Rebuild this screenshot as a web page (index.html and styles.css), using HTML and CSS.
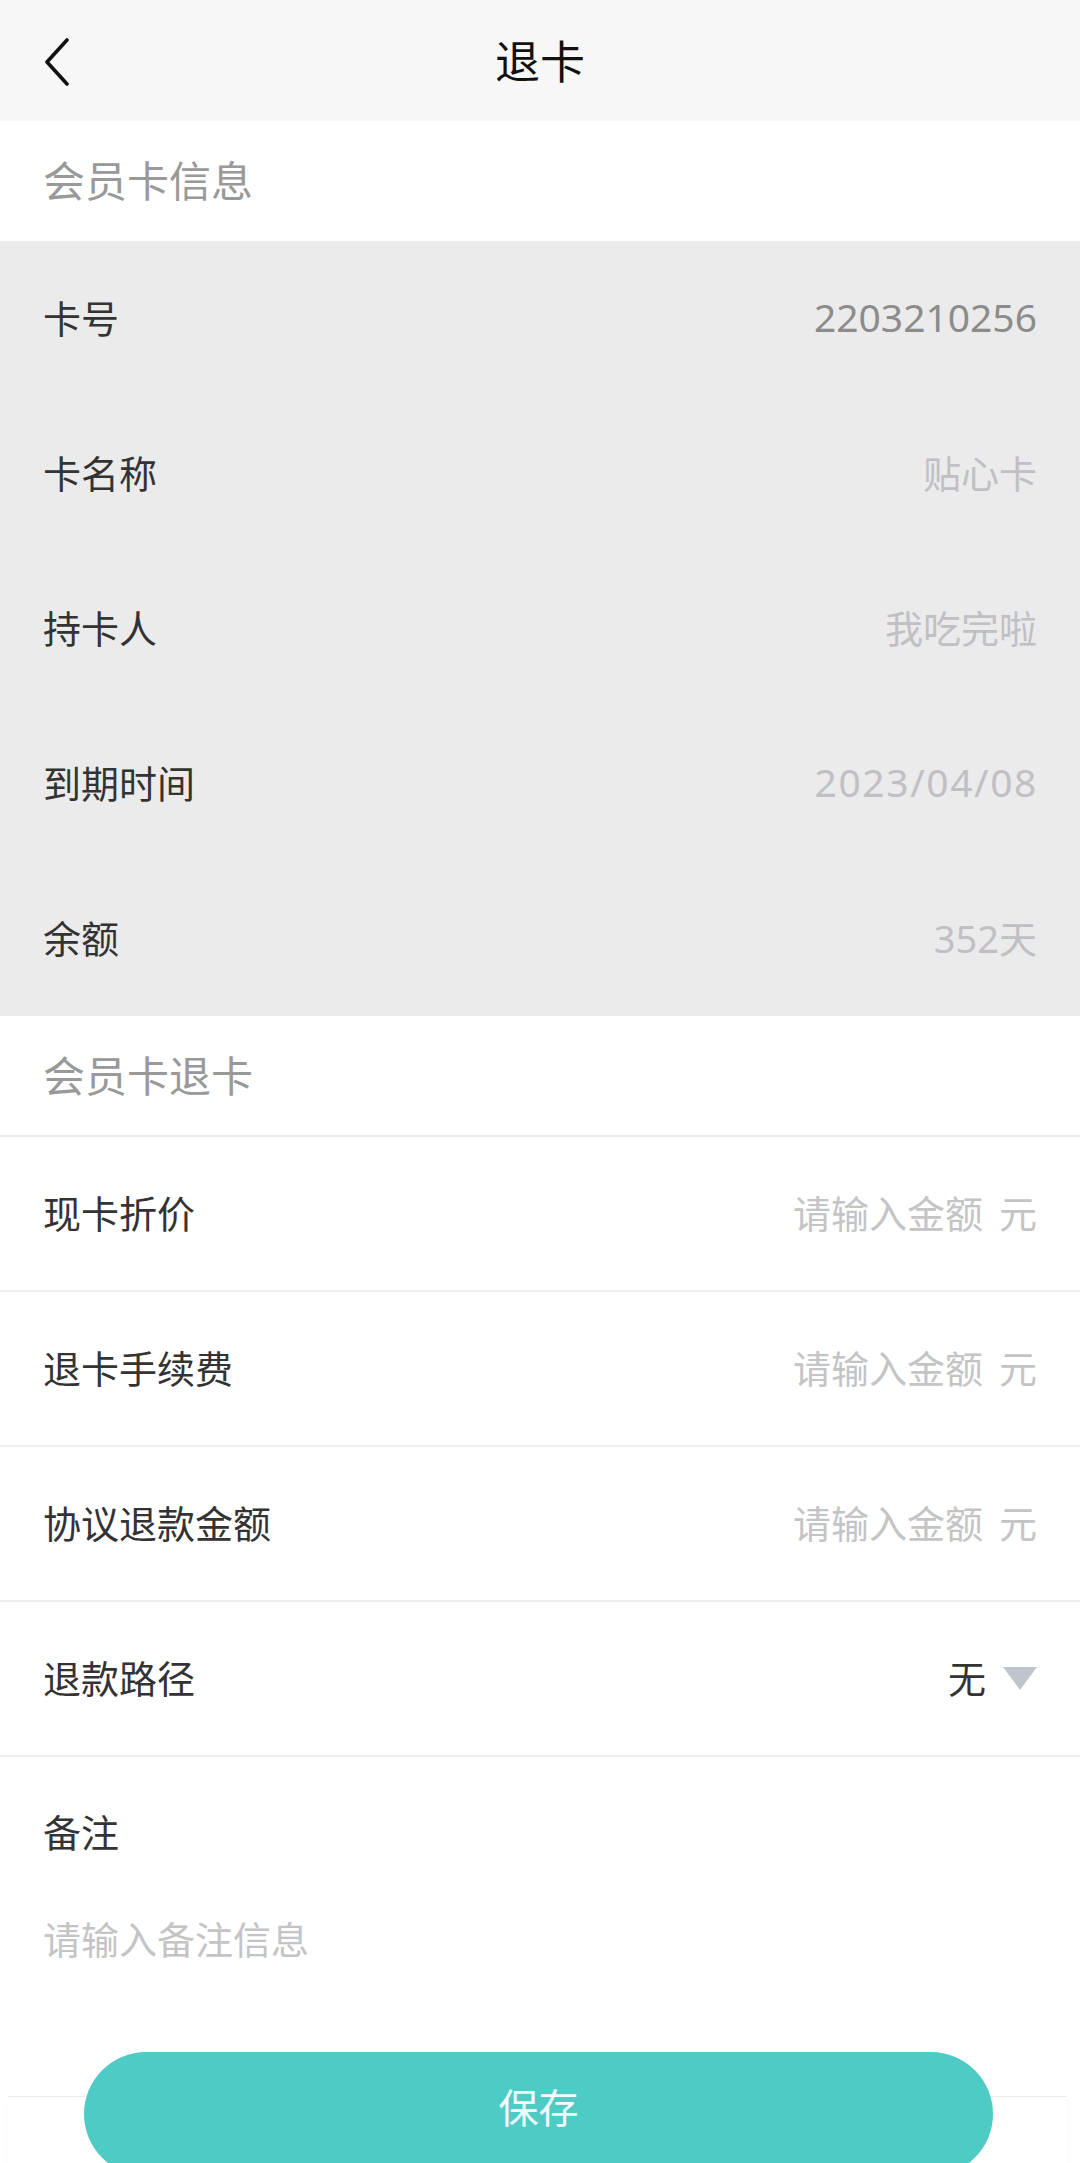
FILE: index.html
```html
<!DOCTYPE html>
<html>

<head>
    <meta charset="utf-8">
    <title>退卡</title>
    <link rel="stylesheet" href="styles.css">
</head>

<body>
    <div class="page">
        <div class="nav-bar">
            <span class="nav-back">
                <svg width="26" height="48" viewBox="0 0 26 48">
                    <polyline points="23,2 3,24 23,46" fill="none" stroke="#111" stroke-width="3.6" stroke-linecap="round" stroke-linejoin="round" />
                </svg>
            </span>
            <span class="nav-title">退卡</span>
        </div>

        <div class="section-title">会员卡信息</div>
        <div class="info-list">
            <div class="info-row">
                <span class="row-label">卡号</span>
                <span class="row-value dark">2203210256</span>
            </div>
            <div class="info-row">
                <span class="row-label">卡名称</span>
                <span class="row-value">贴心卡</span>
            </div>
            <div class="info-row">
                <span class="row-label">持卡人</span>
                <span class="row-value">我吃完啦</span>
            </div>
            <div class="info-row">
                <span class="row-label">到期时间</span>
                <span class="row-value date">2023/04/08</span>
            </div>
            <div class="info-row">
                <span class="row-label">余额</span>
                <span class="row-value">352天</span>
            </div>
        </div>

        <div class="section-title bordered">会员卡退卡</div>
        <div class="form-list">
            <div class="form-row">
                <span class="row-label">现卡折价</span>
                <span class="row-input">请输入金额<span class="unit">元</span></span>
            </div>
            <div class="form-row">
                <span class="row-label">退卡手续费</span>
                <span class="row-input">请输入金额<span class="unit">元</span></span>
            </div>
            <div class="form-row">
                <span class="row-label">协议退款金额</span>
                <span class="row-input">请输入金额<span class="unit">元</span></span>
            </div>
            <div class="form-row">
                <span class="row-label">退款路径</span>
                <span class="row-select">无<span class="caret"></span></span>
            </div>
            <div class="remark">
                <div class="row-label">备注</div>
                <div class="remark-input">请输入备注信息</div>
            </div>
        </div>

        <div class="footer">
            <button class="save-btn">保存</button>
        </div>
    </div>
</body>

</html>
```

FILE: styles.css
```css
body {
    margin: 0;
    background-color: #fff;
    font-family: "Noto Sans", "Noto Sans CJK SC", sans-serif;
    color: #333;
}

.page {
    width: 1080px;
    height: 2163px;
    overflow: hidden;
    position: relative;
}

.nav-bar {
    height: 121px;
    background-color: #f7f7f7;
    display: flex;
    align-items: center;
    justify-content: center;
    position: relative;
}

.nav-back {
    position: absolute;
    left: 44px;
    top: 38px;
    display: flex;
}

.nav-title {
    font-size: 45px;
    color: #111;
    margin-top: -2px;
}

.section-title {
    height: 120px;
    padding: 0 0 5px 43px;
    box-sizing: border-box;
    display: flex;
    align-items: center;
    font-size: 42px;
    color: #999;
    background-color: #fff;
}

.section-title.bordered {
    height: 121px;
    border-bottom: 2px solid #ededed;
}

.info-list {
    background-color: #ebebeb;
}

.info-row,
.form-row {
    height: 155px;
    padding: 0 43px 5px;
    display: flex;
    align-items: center;
    justify-content: space-between;
    box-sizing: border-box;
}

.form-row {
    border-bottom: 2px solid #efefef;
}

.row-label {
    font-size: 38px;
    color: #333;
}

.row-value {
    font-size: 38px;
    color: #c0c0c4;
}

.row-value.dark {
    font-size: 39px;
    color: #8c8c8c;
}

.row-value.date {
    font-size: 39px;
    letter-spacing: 1.6px;
    margin-right: -1px;
}

.row-input {
    font-size: 38px;
    color: #c4c4c6;
}

.unit {
    margin-left: 16px;
}

.row-select {
    font-size: 38px;
    color: #333;
    display: flex;
    align-items: center;
}

.caret {
    width: 0;
    height: 0;
    margin: 4px 0 0 17px;
    border-left: 17px solid transparent;
    border-right: 17px solid transparent;
    border-top: 23px solid #c0c4cc;
}

.remark {
    padding: 46px 43px 0;
}

.remark-input {
    margin-top: 52px;
    font-size: 38px;
    color: #c4c4c6;
}

.footer {
    position: absolute;
    left: 8px;
    right: 13px;
    top: 2096px;
    height: 80px;
    border-top: 1px solid #ececec;
    box-shadow: 0 6px 10px rgba(0, 0, 0, 0.03);
    background-color: #fff;
}

.save-btn {
    position: absolute;
    left: 76px;
    top: -45px;
    width: 909px;
    height: 124px;
    border: none;
    border-radius: 62px;
    background-color: #4fcbc6;
    color: #f2fbfa;
    font-family: "Noto Sans", "Noto Sans CJK SC", sans-serif;
    font-size: 40px;
    padding: 0 0 16px;
    cursor: pointer;
}
```
